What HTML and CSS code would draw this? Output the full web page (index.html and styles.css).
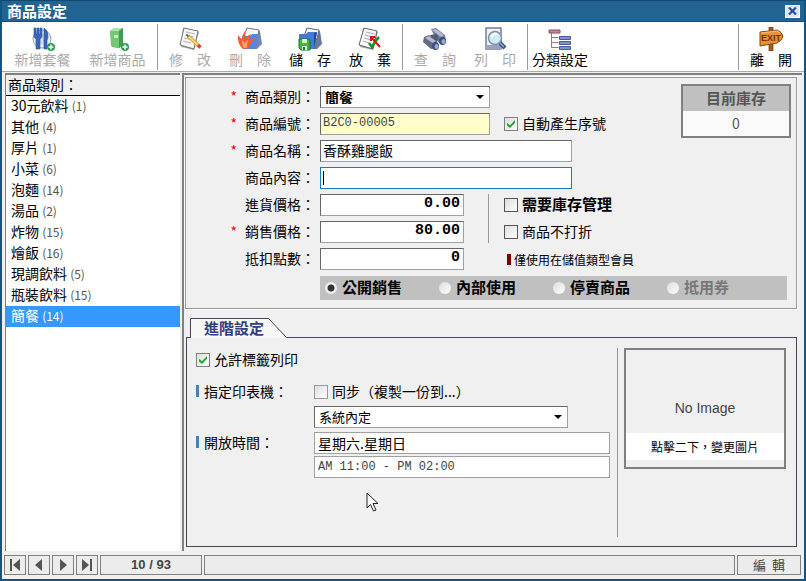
FILE: index.html
```html
<!DOCTYPE html>
<html lang="zh-Hant">
<head>
<meta charset="utf-8">
<title>商品設定</title>
<link rel="stylesheet" href="styles.css">
</head>
<body>
<div class="window">
  <header class="titlebar">
    <h1>商品設定</h1>
    <button class="close" type="button" aria-label="關閉">
      <svg width="9" height="8" viewBox="0 0 9 8"><path d="M1 .5L8 7.500M8 .5L1 7.500" stroke="#1f4fb0" stroke-width="2.200"/></svg>
    </button>
  </header>

  <nav class="toolbar">
    <button class="tool wide" type="button" disabled>
      <svg width="26" height="24" viewBox="0 0 26 24">
        <circle cx="12" cy="12" r="9" fill="#e9eef8" stroke="#7f97c6"/><circle cx="12" cy="12" r="5.500" fill="#c9d5ec"/>
        <path d="M4 1v8q0 2 2 3v10h4V12q2-1 2-3V1h-2v6H9V1H7v6H6V1zM14 22V1q4 2 4 8 0 3-1 4v9z" fill="#2456b4" stroke="#173f8c" stroke-width=".6"/>
        <circle cx="21" cy="20" r="4" fill="#17943a"/><path d="M18.500 20h5M21 17.500v5" stroke="#fff" stroke-width="1.500"/>
      </svg><span>新增套餐</span>
    </button>
    <button class="tool wide" type="button" disabled>
      <svg width="24" height="24" viewBox="0 0 24 24">
        <path d="M4 4l4-3h9v17l-4 3-7-1z" fill="#3fa648"/><path d="M4 4l4-3h9l-4 3z" fill="#a5dfa0"/><path d="M4 4h9v17l-8-2z" fill="#66c566"/><path d="M13 4l4-3v17l-4 3z" fill="#2f913e"/><path d="M8 8h4v3H8z" fill="#c8f0bd"/>
        <circle cx="19" cy="20" r="4" fill="#17943a"/><path d="M16.500 20h5M19 17.500v5" stroke="#fff" stroke-width="1.500"/>
      </svg><span>新增商品</span>
    </button>
    <i class="sep"></i>
    <button class="tool" type="button" disabled>
      <svg width="24" height="24" viewBox="0 0 24 24">
        <path d="M5 1l16 4-5 18-13-3z" fill="#aaa"/><path d="M6 1l14 3-4 18-14-4z" fill="#f8f8f8" stroke="#555" stroke-width=".9"/><path d="M8 5l9 2M7 8l9 2M6 11l9 2M5 14l8 2" stroke="#aaa"/>
        <path d="M10 9l11 10" stroke="#d78915" stroke-width="3.500"/><path d="M10 9l11 10" stroke="#ffd45a" stroke-width="1.800"/><path d="M20 18l2.500 2.500" stroke="#d42f2f" stroke-width="3.500"/><path d="M8.500 7.500l2 2" stroke="#333" stroke-width="1.500"/>
      </svg><span>修　改</span>
    </button>
    <button class="tool" type="button" disabled>
      <svg width="26" height="24" viewBox="0 0 26 24">
        <path d="M9 1l14 3 2 13-5 5H8z" fill="#6879a4"/><path d="M10 1l12 2-2 9-13-3z" fill="#f5f6fa" stroke="#666"/><path d="M5 9h8l2-2h6l-2 15H6z" fill="#4379dc"/>
        <path d="M6 22Q0 17 1 8q2 3 4 4 0-4 3-8 0 5 1 7 2-3 5-4-2 4-1 6 2-2 5-2-4 4-6 10z" fill="#f04b1d"/><path d="M7 21q-3-4-2-8 3 2 3 4 1-4 3-4-1 4-1 8z" fill="#ff965a"/>
      </svg><span>刪　除</span>
    </button>
    <button class="tool" type="button">
      <svg width="26" height="24" viewBox="0 0 26 24">
        <path d="M9 1l14 3 2 13-5 5H8z" fill="#68799c"/><path d="M10 1l12 2-2 9-13-3z" fill="#f5f6fa" stroke="#666"/><path d="M2 7h7l2-2h9l-3 17H2z" fill="#4379dc"/><path d="M17 6l3-1-3 17z" fill="#234b9d"/>
        <path d="M2 12h11v11H4l-2-2z" fill="#36bd35" stroke="#17792c"/><path d="M5 12h5v4H5z" fill="#d9f6cf"/><path d="M5 19h5v4H5z" fill="#e8f4e5"/><path d="M6 20h2v3H6z" fill="#17792c"/>
      </svg><span>儲　存</span>
    </button>
    <button class="tool" type="button">
      <svg width="26" height="24" viewBox="0 0 26 24">
        <path d="M6 1l15 4-5 18-13-3z" fill="#aaa"/><path d="M7 1l13 3-4 18-14-4z" fill="#f8f8f8" stroke="#555" stroke-width=".9"/><path d="M9 5l9 2M8 8l8 2M7 11l7 2M6 14l6 2" stroke="#aaa"/>
        <path d="M12 16l3 4q3-6 7-10" fill="none" stroke="#159329" stroke-width="2.500"/><path d="M14 10l9 10M14 14v-4h4" fill="none" stroke="#df1712" stroke-width="2"/>
      </svg><span>放　棄</span>
    </button>
    <i class="sep"></i>
    <button class="tool" type="button" disabled>
      <svg width="26" height="24" viewBox="0 0 26 24">
        <path d="M9 2l5-1 9 7 1 7-4 3-5-4z" fill="#67718f"/><path d="M2 10l5-2 8 6-1 7-5 1-8-7z" fill="#525b79"/><path d="M8 8l7-1 2 5-5 4z" fill="#414965"/><path d="M10 3l4-1 8 6-3 2zM3 11l4-2 7 5-3 2z" fill="#aab2cc"/>
        <ellipse cx="20.500" cy="14" rx="3.500" ry="4" fill="#303b65"/><ellipse cx="21.500" cy="14.500" rx="2" ry="2.500" fill="#7ba5eb"/><ellipse cx="13.500" cy="19" rx="3.500" ry="4" fill="#303b65"/><ellipse cx="14.500" cy="19.500" rx="2" ry="2.500" fill="#7ba5eb"/>
      </svg><span>查　詢</span>
    </button>
    <button class="tool" type="button" disabled>
      <svg width="24" height="24" viewBox="0 0 24 24">
        <path d="M3 1h15v21H3z" fill="#f0f1f7" stroke="#686d8a" stroke-width="1.500"/><path d="M3 18h15v4H3z" fill="#9298b5"/><path d="M16 15l6 6" stroke="#233b65" stroke-width="4"/><path d="M16 15l5 5" stroke="#83a6cf" stroke-width="1.500"/><circle cx="12" cy="11" r="6.500" fill="#cce9f7" stroke="#71869b" stroke-width="1.500"/><path d="M8 10q2-4 6-3" fill="none" stroke="#fff" stroke-width="2"/>
      </svg><span>列　印</span>
    </button>
    <i class="sep"></i>
    <button class="tool" type="button">
      <svg width="24" height="24" viewBox="0 0 24 24">
        <path d="M3.500 6v14.500h7M3.500 10.500h7M3.500 15.500h7" fill="none" stroke="#a66d76"/><path d="M1 3h11v3H1z" fill="#c48791" stroke="#8a4e5a"/>
        <g fill="#8193cd" stroke="#4a5994"><path d="M11.500 9.500h11v3h-11zM11.500 14.500h11v3h-11zM11.500 19.500h11v3h-11z"/></g>
      </svg><span>分類設定</span>
    </button>
    <div class="exit">
      <i class="sep"></i>
      <button class="tool" type="button">
        <svg width="26" height="24" viewBox="0 0 26 24">
          <path d="M11 0h4v24h-4z" fill="#a55a20" stroke="#633411" stroke-width=".7"/><path d="M2 5l17-2q5 2 6 6-1 5-6 7L2 19z" fill="#e69038" stroke="#884515"/><path d="M3 6l16-2 3 2" stroke="#ffc276" fill="none"/>
          <text class="exit-sign" x="3" y="14">EXIT</text>
        </svg><span>離　開</span>
      </button>
    </div>
  </nav>

  <main class="main">
    <aside class="categories">
      <h2>商品類別：</h2>
      <ul>
        <li>30元飲料 <small>(1)</small></li>
        <li>其他 <small>(4)</small></li>
        <li>厚片 <small>(1)</small></li>
        <li>小菜 <small>(6)</small></li>
        <li>泡麵 <small>(14)</small></li>
        <li>湯品 <small>(2)</small></li>
        <li>炸物 <small>(15)</small></li>
        <li>燴飯 <small>(16)</small></li>
        <li>現調飲料 <small>(5)</small></li>
        <li>瓶裝飲料 <small>(15)</small></li>
        <li class="selected">簡餐 <small>(14)</small></li>
      </ul>
    </aside>

    <form class="detail">
      <section class="product">
        <div class="product-top">
          <div class="rows">
            <div class="row">
              <label class="name required" for="category">商品類別：</label>
              <span class="select medium"><select id="category" class="strong"><option>簡餐</option></select></span>
            </div>
            <div class="row">
              <label class="name required" for="code">商品編號：</label>
              <input id="code" class="field medium code" type="text" value="B2C0-00005">
              <label class="check after"><input type="checkbox" checked><span>自動產生序號</span></label>
            </div>
            <div class="row">
              <label class="name required" for="title">商品名稱：</label>
              <input id="title" class="field long" type="text" value="香酥雞腿飯">
            </div>
            <div class="row">
              <label class="name" for="content">商品內容：</label>
              <input id="content" class="field long active" type="text">
            </div>
            <div class="prices">
              <div class="rows">
                <div class="row">
                  <label class="name" for="cost">進貨價格：</label>
                  <input id="cost" class="field short number" type="text" value="0.00">
                </div>
                <div class="row">
                  <label class="name required" for="price">銷售價格：</label>
                  <input id="price" class="field short number" type="text" value="80.00">
                </div>
              </div>
              <div class="options">
                <label class="check bold"><input type="checkbox"><span>需要庫存管理</span></label>
                <label class="check"><input type="checkbox"><span>商品不打折</span></label>
              </div>
            </div>
            <div class="row">
              <label class="name" for="points">抵扣點數：</label>
              <input id="points" class="field short number" type="text" value="0">
              <span class="note">僅使用在儲值類型會員</span>
            </div>
          </div>
          <div class="stock"><strong>目前庫存</strong><span>0</span></div>
        </div>
        <div class="states">
          <label><input type="radio" name="state" checked><span>公開銷售</span></label>
          <label><input type="radio" name="state"><span>內部使用</span></label>
          <label><input type="radio" name="state"><span>停賣商品</span></label>
          <label class="dim"><input type="radio" name="state"><span>抵用券</span></label>
        </div>
      </section>

      <section class="advanced">
        <h2 class="tab">
          <svg width="97" height="20" viewBox="0 0 97 20"><path d="M.5 20V.5H78.500L96.500 19.500V20z" fill="#f7f7f8"/><path d="M.5 20V.5H78.500L96.500 19.500" fill="none" stroke="#45455a"/></svg>
          <span>進階設定</span>
        </h2>
        <div class="sheet">
          <div class="settings">
            <label class="check"><input type="checkbox" checked><span>允許標籤列印</span></label>
            <div class="setting printer">
              <label class="caption" for="printer">指定印表機：</label>
              <div class="controls">
                <label class="check pale"><input type="checkbox"><span>同步（複製一份到...）</span></label>
                <span class="select large"><select id="printer"><option>系統內定</option></select></span>
              </div>
            </div>
            <div class="setting hours">
              <label class="caption" for="days">開放時間：</label>
              <div class="controls">
                <input id="days" class="field soft" type="text" value="星期六.星期日">
                <input class="field soft code-text" type="text" aria-label="時段" value="AM 11:00 - PM 02:00">
              </div>
            </div>
          </div>
          <div class="picture-side">
            <button class="picture" type="button"><span class="empty">No Image</span><span class="hint">點擊二下，變更圖片</span></button>
          </div>
        </div>
      </section>
    </form>
  </main>

  <footer class="status">
    <button type="button" aria-label="第一筆"><svg width="14" height="14" viewBox="0 0 14 14"><path d="M2 1h2v12H2zM12 1v12L5 7z"/></svg></button>
    <button type="button" aria-label="上一筆"><svg width="14" height="14" viewBox="0 0 14 14"><path d="M10 1v12L3 7z"/></svg></button>
    <button type="button" aria-label="下一筆"><svg width="14" height="14" viewBox="0 0 14 14"><path d="M4 1v12l7-6z"/></svg></button>
    <button type="button" aria-label="最後一筆"><svg width="14" height="14" viewBox="0 0 14 14"><path d="M10 1h2v12h-2zM2 1v12l7-6z"/></svg></button>
    <output class="position">10 / 93</output>
    <div class="message"></div>
    <div class="mode">編&nbsp; 輯</div>
  </footer>
  <svg class="cursor" width="13" height="20" viewBox="0 0 13 20"><path d="M1 1v15l3.500-3.500 3 6.500 2.500-1-3-6.500h5z" fill="#fff" stroke="#222"/></svg>
</div>
</body>
</html>
```
FILE: styles.css
```css
* { box-sizing: border-box; }

body {
  margin: 0;
  font: 14px/20px "Noto Sans CJK TC", "Liberation Sans", sans-serif;
  color: #000;
}
h1, h2, ul { margin: 0; padding: 0; font-size: inherit; }
button, input, select { font: inherit; color: inherit; margin: 0; padding: 0; }
svg { display: block; flex: none; }

.window {
  position: relative;
  display: flex;
  flex-direction: column;
  min-height: 100vh;
  padding: 0 2px 2px;
  background: #115584;
}

.titlebar {
  display: flex;
  align-items: center;
  justify-content: space-between;
  height: 22px;
  padding: 0 4px 0 5px;
  background: #216392;
  border-top: 1px solid #10486f;
  border-bottom: 1px solid #174f78;
  color: #fff;
}
.titlebar h1 { font-size: 15px; }
.close {
  display: grid;
  place-items: center;
  width: 15px;
  height: 13px;
  border: 1px solid #fff;
  background: #dfe5f5;
}

.toolbar {
  display: flex;
  height: 50px;
  padding: 2px 3px 0;
  background: #fff;
  border-bottom: 1px solid #aaa;
}
.tool {
  display: flex;
  flex-direction: column;
  align-items: center;
  width: 60px;
  padding-top: 3px;
  border: 0;
  background: none;
  white-space: nowrap;
}
.tool.wide { width: 75px; }
.tool:disabled { color: #aaa; }
.tool:disabled svg { opacity: .9; }
.tool span { line-height: 17px; }
.sep { flex: none; width: 1px; height: 46px; margin: 0 2px; background: #999; }
.exit { display: flex; margin-left: auto; }
.exit-sign { font: bold 9px "Liberation Sans", sans-serif; fill: #74310a; }

.main {
  flex: 1;
  display: flex;
  gap: 2px;
  padding: 1px 2px 4px 3px;
  background: #f0f0f0;
}

.categories {
  width: 175px;
  border: solid #808080;
  border-width: 2px 0 0 1px;
  background: #fff;
}
.categories h2 {
  height: 21px;
  padding-left: 2px;
  background: #f0f0f0;
  border-bottom: 1px solid #000;
  font-weight: normal;
  line-height: 18px;
}
.categories ul { list-style: none; }
.categories li { height: 21px; padding-left: 5px; line-height: 19px; }
.categories small { font-size: 12px; color: #555; }
.categories .selected { background: #3399ff; color: #fff; }
.categories .selected small { color: #fff; }

.detail {
  flex: 1;
  display: flex;
  flex-direction: column;
  gap: 9px;
  padding: 2px 5px 4px 1px;
  border: solid #808080;
  border-width: 2px 0 0 2px;
}

.product {
  border: 1px solid #999;
  padding: 8px 9px 8px 0;
  outline: 1px solid #fafafa;
}
.product-top { display: flex; justify-content: space-between; align-items: flex-start; }
.rows { display: flex; flex-direction: column; gap: 5px; }
.row { display: flex; align-items: center; height: 22px; }
.name { width: 134px; padding: 0 5px 2px 0; text-align: right; white-space: nowrap; }
.required::before { content: "*"; margin-right: 8px; color: #f00; }

.field {
  height: 22px;
  padding: 0 3px 3px 2px;
  border: 1px solid #a0a0a0;
  border-top-color: #666;
  border-left-color: #666;
  outline: none;
  background: #fff;
}
.medium { width: 170px; }
.long { width: 252px; }
.short { width: 144px; }
.code { background: #ffffcc; }
.code, .code-text { font-family: "Liberation Mono", monospace; font-size: 12px; color: #444; }
.number { text-align: right; font: bold 15px "Liberation Mono", monospace; }
.active {
  border-color: #1080c0;
  background: linear-gradient(#000, #000) 2px 3px / 1px 14px no-repeat #fff;
}
.soft { width: 296px; border-color: #a0a0a0; padding: 0 3px; }

.select { position: relative; display: block; height: 22px; }
.select select {
  width: 100%;
  height: 22px;
  padding: 0 20px 3px 4px;
  border: 1px solid #a0a0a0;
  border-top-color: #666;
  border-left-color: #666;
  border-radius: 0;
  background: #fff;
  appearance: none;
  font-size: 13px;
}
.select .strong { font-weight: bold; font-size: 14px; }
.select::after {
  content: "";
  position: absolute;
  top: 9px;
  right: 6px;
  border: 4px solid transparent;
  border-top-color: #000;
  border-bottom: 0;
}
.large { width: 254px; }

.check { display: flex; align-items: center; gap: 4px; height: 22px; white-space: nowrap; }
.check span { padding-bottom: 2px; }
.check.after { margin-left: 14px; }
.bold { font-weight: bold; font-size: 15px; }
input[type="checkbox"] {
  flex: none;
  display: grid;
  place-items: center;
  width: 14px;
  height: 14px;
  appearance: none;
  border: 1px solid #555;
  background: linear-gradient(135deg, #ddd, #fff);
}
.pale input[type="checkbox"] { border-color: #999; }
input[type="checkbox"]:checked { border-color: #808080; }
input[type="checkbox"]:checked::before {
  content: "";
  width: 8px;
  height: 8px;
  background: #20a82b;
  clip-path: polygon(0 35%, 38% 65%, 100% 0, 100% 35%, 38% 100%, 0 68%);
}

.prices { display: flex; }
.options {
  display: flex;
  flex-direction: column;
  gap: 5px;
  margin-left: 24px;
  padding-left: 15px;
  border-left: 1px solid #999;
}
.note { margin-left: 43px; padding-left: 3px; border-left: 4px solid #800000; font-size: 12px; line-height: 11px; }

.stock {
  display: flex;
  flex-direction: column;
  width: 110px;
  margin: -2px -4px 0 0;
  border: 2px solid #808080;
  background: #fafafa;
  color: #555;
  text-align: center;
}
.stock strong { height: 25px; background: #c0c0c0; font-size: 15px; line-height: 23px; }
.stock span { line-height: 25px; }

.states {
  display: grid;
  grid-template-columns: repeat(4, 1fr);
  align-items: center;
  height: 24px;
  margin: 6px 0 0 134px;
  padding: 0 6px 0 5px;
  background: #c0c0c0;
  font-weight: bold;
  font-size: 15px;
}
.states label { display: flex; align-items: center; gap: 5px; }
.states span { padding-bottom: 2px; }
.states .dim { color: #777; }
.states input {
  width: 12px;
  height: 12px;
  appearance: none;
  border-radius: 50%;
  background: linear-gradient(135deg, #ddd, #fff);
}
.states input:checked { background: radial-gradient(circle, #333 0 3px, #eee 4px); }

.advanced { flex: 1; display: flex; flex-direction: column; padding-left: 1px; }
.tab { position: relative; z-index: 1; width: 97px; height: 19px; margin-left: 4px; }
.tab svg { position: absolute; }
.tab span { position: relative; display: block; padding-left: 14px; font-size: 15px; color: #33407f; }
.sheet {
  flex: 1;
  display: flex;
  justify-content: space-between;
  padding: 10px 10px 9px 9px;
  border: 1px solid #45455a;
}
.settings > .check { height: 24px; }
.setting { display: flex; }
.caption {
  align-self: flex-start;
  width: 118px;
  margin-top: 4px;
  padding-left: 5px;
  border-left: 3px solid #4682b4;
  line-height: 12px;
}
.printer { margin-top: 9px; }
.hours { margin-top: 4px; }
.controls { display: flex; flex-direction: column; gap: 2px; }
.printer .controls { gap: 3px; }
.picture-side { padding-left: 6px; border-left: 1px solid #999; }
.picture {
  display: flex;
  flex-direction: column;
  width: 162px;
  height: 121px;
  padding-bottom: 7px;
  border: 2px solid #808080;
  background: #f0f0f0;
}
.empty { flex: 1; padding-top: 33px; width: 100%; font: 14px/50px "Liberation Sans", sans-serif; color: #444; }
.hint { width: 100%; background: #fff; font-size: 12px; line-height: 27px; }

.status {
  display: flex;
  gap: 2px;
  padding: 0 3px 4px 2px;
  background: #f0f0f0;
  color: #444;
}
.status > * { height: 20px; border: 1px solid #808080; background: #ececec; }
.status button { display: grid; place-items: center; width: 22px; }
.status svg { fill: #555; }
.position { width: 102px; font: bold 13px/18px "Liberation Sans", sans-serif; text-align: center; }
.message { flex: 1; }
.mode { width: 64px; font-size: 13px; line-height: 17px; text-align: center; }

.cursor { position: absolute; left: 366px; top: 492px; }
```
